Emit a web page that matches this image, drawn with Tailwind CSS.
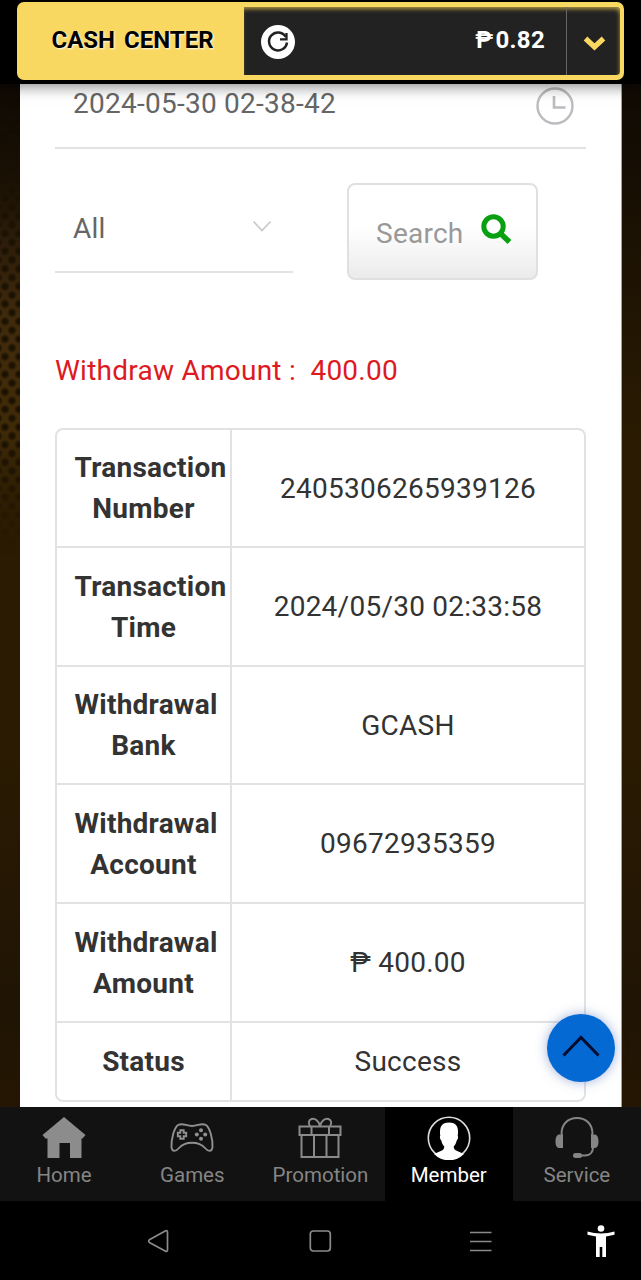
<!DOCTYPE html>
<html lang="en">
<head>
  <meta charset="UTF-8" />
  <meta name="viewport" content="width=device-width, initial-scale=1.0"/>
  <title>Cash Center</title>
  <script src="https://cdn.jsdelivr.net/npm/@tailwindcss/browser@4"></script>
</head>
<body class="bg-black font-['Roboto',sans-serif]">
  <div class="w-[641px] h-[1280px] flex flex-col overflow-hidden">

    <!-- Header -->
    <header class="relative z-10 h-[84px] shrink-0 bg-black pt-[2px] pl-[17px] shadow-[0_2px_14px_rgba(0,0,0,0.5)]">
      <div class="w-[607px] h-[78px] flex rounded-[7px] overflow-hidden bg-[#f9d862]">
        <div class="w-[227px] shrink-0 flex items-center justify-center pb-[2px] pl-[4px] text-[24px] font-bold text-black whitespace-nowrap [word-spacing:3px] [text-shadow:1px_1px_2px_rgba(255,255,255,0.9)]">CASH CENTER</div>
        <div class="flex-1 mt-[5px] mb-[5px] mr-[4px] flex items-stretch rounded-r-[4px] bg-[#222] shadow-[inset_-1px_3px_4px_-1px_#b49a43]">
          <div class="flex-1 flex items-center justify-between pl-[17px] pr-[21px]">
            <svg class="size-[34px] mt-[2px]" viewBox="0 0 34 34" fill="none">
              <circle cx="17" cy="17" r="17" fill="#fff"/>
              <path d="M24.8 11.8A9 9 0 1 0 26 17.5" stroke="#222" stroke-width="2.5"/>
              <path d="M25.5 8v6.300h-6.500" stroke="#222" stroke-width="2.300"/>
            </svg>
            <span class="text-[24px] font-bold text-white tracking-[0.3px] pb-[3px]">₱<span class="ml-[2px]">0.82</span></span>
          </div>
          <div class="w-[54px] flex items-center justify-center pl-[2px] border-l border-[#666]">
            <svg class="w-[23px] h-[16px] mt-[3px]" viewBox="0 0 23 16" fill="none">
              <path d="M2.500 3.500l9 8.500 9-8.500" stroke="#f9d862" stroke-width="5.200"/>
            </svg>
          </div>
        </div>
      </div>
    </header>

    <!-- Content -->
    <main class="h-[1023px] shrink-0 flex bg-[linear-gradient(#100a04,#2a1b02_35%,#2a1b02_65%,#201404_90%,#241602)]">
      <div class="w-[20px] shrink-0">
        <div class="h-[470px] bg-[radial-gradient(circle,#1c1202_2px,transparent_5px),radial-gradient(circle,#1c1202_2px,transparent_5px),linear-gradient(#100a04,#1c1206_20%,#402a0c_50%,#402b08_72%,#2a1b02)] bg-[size:14px_17.600px,14px_17.600px,100%_100%] bg-[position:-2px_0,5px_8.800px,0_0] mask-[linear-gradient(transparent,black_30%,black_75%,transparent)]"></div>
      </div>
      <div class="w-[602px] h-full bg-white border-r border-[#a8a294] pl-[35px] pr-[35px] pt-px text-[28px] tracking-[0.250px] text-[#333]">

        <div class="h-[64px] flex justify-between border-b-2 border-[#e2e2e2] pl-[18px] pr-[12px] text-[#666]">
          <span class="leading-[38px]">2024-05-30 02-38-42</span>
          <svg class="size-[38px] mt-[2px]" viewBox="0 0 38 38" fill="none" stroke="#bbbcbf">
            <circle cx="19" cy="19" r="17.500" stroke-width="2.400"/>
            <path d="M18 9v11.500h11.500" stroke-width="2.600"/>
          </svg>
        </div>

        <div class="flex mt-[34px]">
          <div class="w-[238px] h-[90px] flex items-center justify-between border-b-2 border-[#e2e2e2] pl-[18px] pr-[21px] text-[#666]">
            <span class="pt-[3px]">All</span>
            <svg class="w-[20px] h-[13px] mb-px" viewBox="0 0 20 13" fill="none">
              <path d="M1.500 1.500l8.500 9 8.500-9" stroke="#c8cacc" stroke-width="1.800"/>
            </svg>
          </div>
          <button class="w-[191px] h-[97px] ml-[54px] flex items-center pl-[27px] border-2 border-[#e0e0e0] rounded-[8px] bg-linear-to-b from-white from-45% to-[#ebebeb] text-[#999]">
            <span class="pt-[5px]">Search</span>
            <svg class="size-[31px] ml-[17px] mb-[4px]" viewBox="0 0 31 31" fill="none" stroke="#08a010">
              <circle cx="12.500" cy="12.500" r="9.700" stroke-width="5"/>
              <path d="M19.500 19.500l9 8.500" stroke-width="5.500"/>
            </svg>
          </button>
        </div>

        <p class="mt-[70px] leading-[42px] text-[#dd1a22] whitespace-pre">Withdraw Amount :  400.00</p>

        <div class="w-[531px] h-[674px] mt-[36px] grid grid-cols-[175px_1fr] grid-rows-[118px_119px_118px_119px_119px_77px] border-2 border-[#e2e2e2] rounded-[8px] leading-[40.700px] text-center *:flex *:items-center *:justify-center *:border-[#e2e2e2] *:pt-[2px]">
          <div class="border-r-2 border-b-2 font-bold"><span class="w-[138px]">Transaction Number</span></div>
          <div class="border-b-2">2405306265939126</div>
          <div class="border-r-2 border-b-2 font-bold"><span class="w-[138px]">Transaction Time</span></div>
          <div class="border-b-2">2024/05/30 02:33:58</div>
          <div class="border-r-2 border-b-2 font-bold"><span class="w-[138px]">Withdrawal Bank</span></div>
          <div class="border-b-2">GCASH</div>
          <div class="border-r-2 border-b-2 font-bold"><span class="w-[138px]">Withdrawal Account</span></div>
          <div class="border-b-2">09672935359</div>
          <div class="border-r-2 border-b-2 font-bold"><span class="w-[138px]">Withdrawal Amount</span></div>
          <div class="border-b-2">₱ 400.00</div>
          <div class="border-r-2 font-bold"><span class="w-[138px]">Status</span></div>
          <div>Success</div>
        </div>
      </div>
    </main>

    <!-- Back to top -->
    <button class="absolute left-[547px] top-[1014px] size-[68px] rounded-full bg-[#0469d3] flex items-center justify-center shadow-[0_0_12px_rgba(70,100,180,0.5)]">
      <svg class="w-[38px] h-[22px] mb-[4px]" viewBox="0 0 38 22" fill="none">
        <path d="M1.500 20.500L19 2.500l17.500 18" stroke="#060c2c" stroke-width="3"/>
      </svg>
    </button>

    <!-- Tab bar -->
    <nav class="h-[94px] shrink-0 grid grid-cols-5 bg-[#121212] text-[#858585] text-[20.500px] leading-[28px] *:flex *:flex-col *:items-center *:gap-px *:pt-[9px]">
      <a>
        <svg class="size-[44px]" viewBox="0 0 44 44" fill="#8c8c8c">
          <path d="M22 1L43.500 19l-3 3.500H39.500V42H28V27H17.500v15H5.500V22.500h-2l-3-3.500z"/>
        </svg>
        <span>Home</span>
      </a>
      <a>
        <svg class="size-[44px]" viewBox="0 0 44 44" fill="none" stroke="#909090" stroke-width="1.900">
          <path d="M8 9C13 6.500 16 10 22 10S31 6.500 36 9C40 12 43 24 42.500 31C42 36.500 38 35.500 35 32C29 25 15 25 9 32C6 35.500 2 36.500 1.500 31C1 24 4 12 8 9z"/>
          <path d="M10.300 14.300h3.400v2.500h2.500v3.400h-2.500v2.500h-3.400v-2.500H7.800v-3.400h2.500z"/>
          <g fill="#909090" stroke="none"><circle cx="31" cy="14.300" r="2"/><circle cx="31" cy="22.700" r="2"/><circle cx="26.800" cy="18.500" r="2"/><circle cx="35.200" cy="18.500" r="2"/></g>
        </svg>
        <span>Games</span>
      </a>
      <a>
        <svg class="size-[44px]" viewBox="0 0 44 44" fill="none" stroke="#8a8a8a" stroke-width="2">
          <path d="M1.500 10.500h41v8.500h-41zM3.500 19v22h37V19M16 19v22M28.500 19v22M13.500 10.500V19M31 10.500V19"/>
          <path d="M22 10C21 5 17 2 13.500 3C10.500 4 10 7.500 12 10M22 10C23 5 27 2 30.500 3C33.500 4 34 7.500 32 10"/>
        </svg>
        <span>Promotion</span>
      </a>
      <a class="bg-black text-white">
        <svg class="size-[44px]" viewBox="0 0 44 44">
          <circle cx="22" cy="22" r="20.700" fill="none" stroke="#ddd" stroke-width="1.600"/>
          <path fill="#fff" d="M22 6.500c6 0 9 3 9 9 0 2 0 3-.3 4 .8 1 .3 4-1 5-.5 3-2 5-3 6 0 2.500 1 3.500 3.500 4.500l6.800 3A21 21 0 0 1 7 38L13.800 35c2.500-1 3.500-2 3.500-4.500-1-1-2.500-3-3-6-1.300-1-1.800-4-1-5-.3-1-.3-2-.3-4 0-6 3-9 9-9z"/>
        </svg>
        <span>Member</span>
      </a>
      <a>
        <svg class="size-[44px]" viewBox="0 0 44 44" fill="none" stroke="#858585" stroke-width="2">
          <path d="M6.500 18C6.500 8 13 2 22 2s15.500 6 15.500 16M38 31c0 6-4 8.500-8 8.500h-6"/>
          <path d="M7 18v14M37 18v14" stroke-width="2"/>
          <path fill="#858585" stroke="none" d="M8 18.500V32H4.500C2 32 .5 30 .5 25.500S2 18.500 4.500 18.500zM36 18.500V32h3.500c2.500 0 4-2 4-6.500s-1.500-7-4-7z"/>
          <rect x="18" y="37" width="9" height="5" rx="2.500" fill="#858585" stroke="none"/>
        </svg>
        <span>Service</span>
      </a>
    </nav>

    <!-- System buttons -->
    <footer class="h-[79px] shrink-0 flex items-center bg-black">
      <svg class="size-[24px] ml-[146px]" viewBox="0 0 24 24" fill="none" stroke="#8a8a8a" stroke-width="1.700">
        <path d="M21.500 3.200v17.600c0 1.500-1 2-2.300 1.200L3.800 13.800c-1.500-.8-1.500-2.300 0-3.200L19.200 2c1.300-.8 2.300-.3 2.300 1.200z"/>
      </svg>
      <svg class="size-[24px] ml-[138px]" viewBox="0 0 24 24" fill="none" stroke="#8a8a8a" stroke-width="1.700">
        <rect x="2.300" y="2" width="20" height="20" rx="3"/>
      </svg>
      <svg class="size-[24px] ml-[137px]" viewBox="0 0 24 24" stroke="#8a8a8a" stroke-width="1.700">
        <path d="M1 3.500h21.500M1 12.500h21.500M1 21.500h21.500"/>
      </svg>
      <svg class="w-[28px] h-[32px] ml-[94px]" viewBox="0 0 28 32" fill="#fff">
        <circle cx="14" cy="3.500" r="3.300"/>
        <path d="M.5 6.500C9 9 19 9 27.500 6.500v3.200L19 11.500V32h-3.700V22h-2.600v10H9V11.500L.5 9.700z"/>
      </svg>
    </footer>
  </div>
</body>
</html>
